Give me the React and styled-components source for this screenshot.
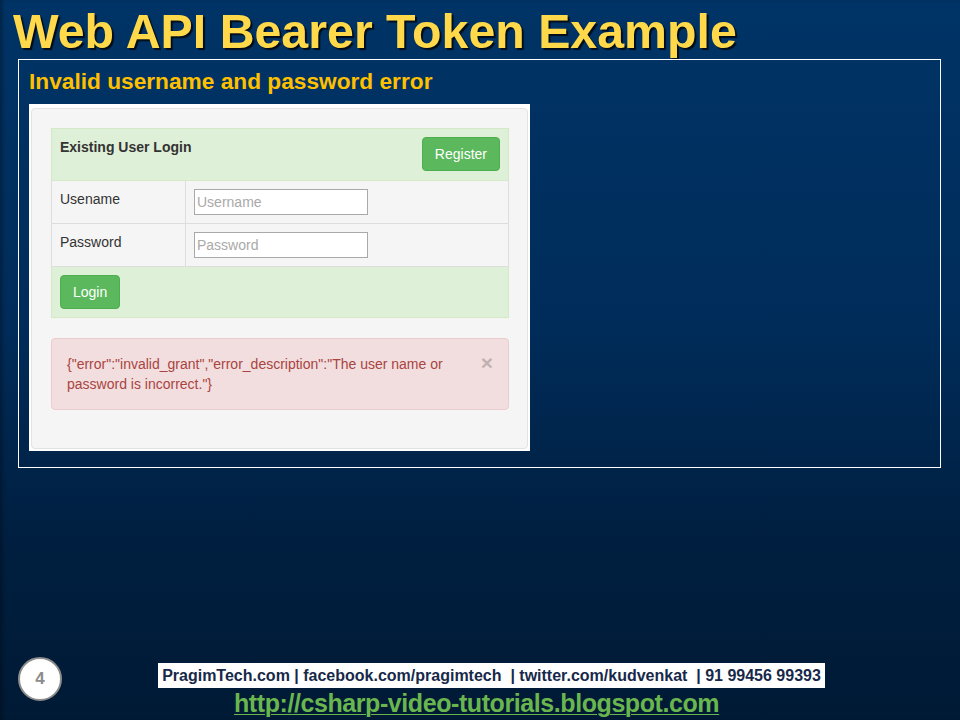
import React from 'react';
import styled, { createGlobalStyle } from 'styled-components';

const Global = createGlobalStyle`
  html, body { margin: 0; padding: 0; }
  body { font-family: "Liberation Sans", Arial, sans-serif; }
`;

const Slide = styled.div`
  width: 960px;
  height: 720px;
  display: flex;
  flex-direction: column;
  background: linear-gradient(to bottom, #003466 0%, #002c5a 45%, #001f40 75%, #001a35 100%);
  box-shadow: inset 4px 0 4px -2px rgba(0, 0, 0, 0.35);
  overflow: hidden;
`;

const Title = styled.h1`
  margin: 0;
  padding: 0 0 0 13px;
  height: 59px;
  line-height: 62px;
  font-family: "Liberation Sans", Arial, sans-serif;
  font-weight: bold;
  font-size: 48.3px;
  color: #ffd94a;
  text-shadow: 2px 2px 1px rgba(0, 0, 0, 0.75);
  white-space: nowrap;
`;

const ContentBox = styled.section`
  box-sizing: border-box;
  margin-left: 18px;
  width: 923px;
  border: 1px solid #ffffff;
  padding: 0 0 16px 10px;
`;

const Subtitle = styled.h2`
  margin: 0;
  height: 44px;
  line-height: 43px;
  font-size: 22.7px;
  font-weight: bold;
  color: #ffc000;
  white-space: nowrap;
`;

const Shot = styled.div`
  width: 497px;
  background: #ffffff;
  padding: 4px 2px 2px 2px;
`;

const Well = styled.div`
  background: #f5f5f5;
  border: 1px solid #e3e3e3;
  border-radius: 4px;
  padding: 19px 18px 38px 19px;
  font-family: "Liberation Sans", Arial, sans-serif;
  font-size: 14px;
  color: #333;
`;

const Table = styled.table`
  width: 100%;
  border-collapse: collapse;
  border: 1px solid #dddddd;
`;

const Row = styled.tr`
  background: ${p => (p.$success ? '#dff0d8' : 'transparent')};
`;

const Cell = styled.td`
  border: 1px solid ${p => (p.$success ? '#d6e9c6' : '#dddddd')};
  padding: 8px 8px ${p => (p.$tall ? '9px' : '8px')} 8px;
  line-height: 20px;
  vertical-align: top;
  width: ${p => p.$w || 'auto'};
`;

const HeaderInner = styled.div`
  display: flex;
  justify-content: space-between;
  align-items: flex-start;
`;

const HeaderText = styled.span`
  font-weight: bold;
  color: #333;
`;

const Button = styled.button`
  font-family: "Liberation Sans", Arial, sans-serif;
  font-size: 14px;
  line-height: 20px;
  color: #ffffff;
  background: #5cb85c;
  border: 1px solid #4cae4c;
  border-radius: 4px;
  padding: 6px 12px;
  height: 34px;
`;

const Input = styled.input`
  box-sizing: border-box;
  width: 174px;
  height: 26px;
  border: 1px solid #a9a9a9;
  padding: 1px 2px;
  font-family: "Liberation Sans", Arial, sans-serif;
  font-size: 14px;
  background: #fff;
  display: block;
  &::placeholder { color: #a9a9a9; }
`;

const Alert = styled.div`
  position: relative;
  margin-top: 20px;
  background: #f2dede;
  border: 1px solid #ebccd1;
  border-radius: 4px;
  padding: 15px 35px 15px 15px;
  color: #a94442;
  line-height: 20px;
`;

const Close = styled.span`
  position: absolute;
  top: 14px;
  right: 15px;
  font-size: 21px;
  font-weight: bold;
  line-height: 20px;
  color: #000;
  opacity: 0.2;
`;

const Spacer = styled.div`
  flex: 1;
`;

const Footer = styled.footer`
  display: flex;
  align-items: flex-start;
  padding: 0 0 0 18px;
  height: 64px;
`;

const PageNum = styled.div`
  box-sizing: border-box;
  margin-top: 1px;
  width: 44px;
  height: 44px;
  border-radius: 50%;
  background: #ffffff;
  border: 2px solid #8c8c8c;
  display: flex;
  align-items: center;
  justify-content: center;
  font-weight: bold;
  font-size: 17px;
  color: #8c8c8c;
`;

const FooterText = styled.div`
  display: flex;
  flex-direction: column;
  align-items: flex-start;
  margin-left: 96px;
  margin-top: 7px;
`;

const InfoBar = styled.div`
  background: #ffffff;
  height: 25px;
  width: 667px;
  display: flex;
  align-items: center;
  justify-content: center;
  font-weight: bold;
  font-size: 16px;
  color: #17294a;
  white-space: pre;
`;

const SiteLink = styled.a`
  margin-left: 76px;
  font-weight: bold;
  font-size: 25px;
  line-height: 30px;
  letter-spacing: -0.42px;
  color: #6ab64e;
  text-decoration: underline;
  text-decoration-thickness: 1px;
  text-underline-offset: 2px;
  white-space: nowrap;
`;

export default function App() {
  return (
    <>
      <Global />
      <Slide>
        <Title>Web API Bearer Token Example</Title>
        <ContentBox>
          <Subtitle>Invalid username and password error</Subtitle>
          <Shot>
            <Well>
              <Table>
                <tbody>
                  <Row $success>
                    <Cell $success $tall colSpan={2}>
                      <HeaderInner>
                        <HeaderText>Existing User Login</HeaderText>
                        <Button>Register</Button>
                      </HeaderInner>
                    </Cell>
                  </Row>
                  <Row>
                    <Cell $w="117px">Usename</Cell>
                    <Cell><Input placeholder="Username" /></Cell>
                  </Row>
                  <Row>
                    <Cell $w="117px">Password</Cell>
                    <Cell><Input type="password" placeholder="Password" /></Cell>
                  </Row>
                  <Row $success>
                    <Cell $success colSpan={2}>
                      <Button>Login</Button>
                    </Cell>
                  </Row>
                </tbody>
              </Table>
              <Alert>
                <Close>×</Close>
                {'{"error":"invalid_grant","error_description":"The user name or password is incorrect."}'}
              </Alert>
            </Well>
          </Shot>
        </ContentBox>
        <Spacer />
        <Footer>
          <PageNum>4</PageNum>
          <FooterText>
            <InfoBar>{'PragimTech.com | facebook.com/pragimtech  | twitter.com/kudvenkat  | 91 99456 99393'}</InfoBar>
            <SiteLink href="#">http://csharp-video-tutorials.blogspot.com</SiteLink>
          </FooterText>
        </Footer>
      </Slide>
    </>
  );
}
